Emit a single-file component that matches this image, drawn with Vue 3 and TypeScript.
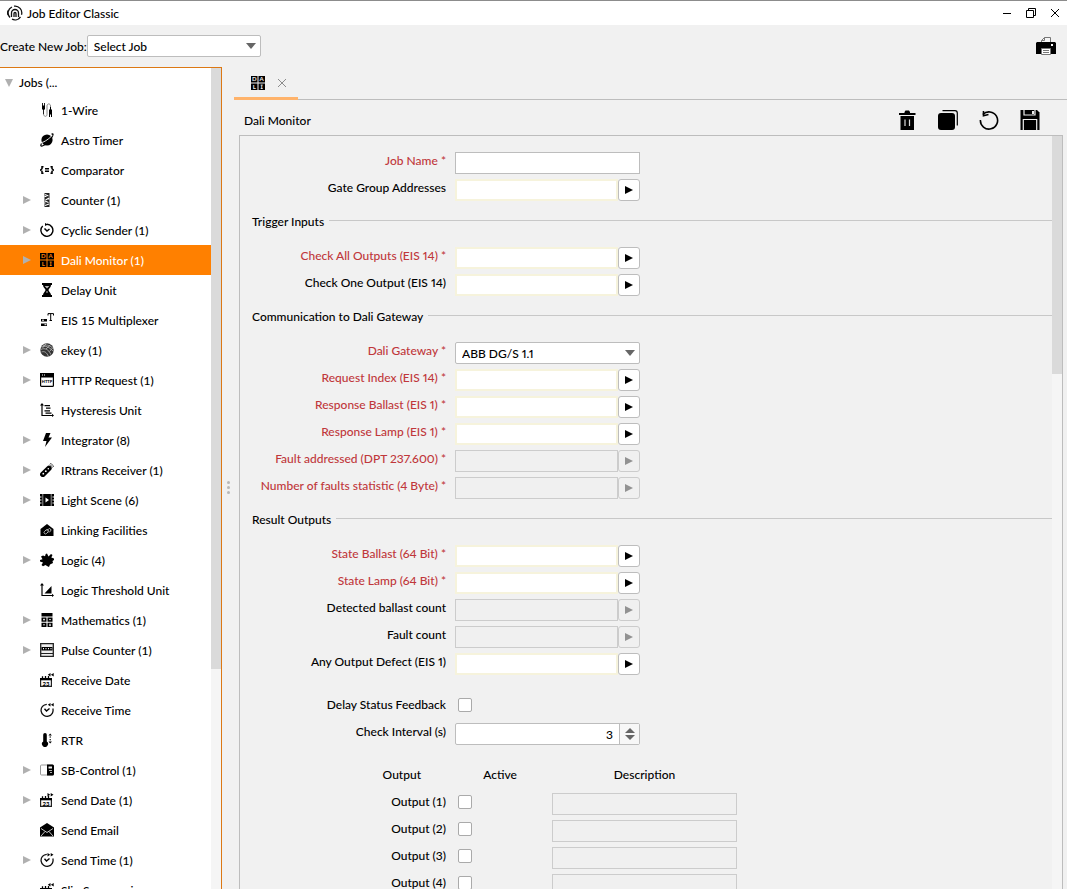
<script setup lang="ts">
import { ref } from 'vue'

interface Job { name: string; icon: string; group?: boolean }
interface Field { label: string; kind: 'text' | 'address' | 'select'; required?: boolean; disabled?: boolean }
interface Section { title: string; fields: Field[] }

const arrows = (right: boolean) => right
  ? '<path d="M7.500 0v3.600l2.700-1.800zM10.700 0v3.600l2.800-1.800z"/>'
  : '<path d="M10.500 0v3.600L7.800 1.800zM13.700 0v3.600L10.900 1.800z"/>'
const calendar =
  '<path d="M.6 6.400h10.800v7H.6z" fill="var(--cut)" stroke="#222" stroke-width="1.200"/><path d="M0 5h12v2.300H0z"/><path d="M2.500 3.200v3M5.500 3v3M8.500 3v3" stroke="#000" stroke-width="1.300"/><text x="6" y="12.500" font-size="6" font-weight="900" text-anchor="middle">23</text>'
const clock =
  '<path d="M6.800 1.300A6 6 0 1 0 12.800 5.500" fill="none" stroke="#111" stroke-width="1.300"/><path d="M4.500 5.800 6.500 8 9.500 5.500" fill="none" stroke="#000" stroke-width="1.400"/>'

const icons: Record<string, string> = {
  wire: '<path d="M2.500 0v3M4.500 0v3M3.500 6v5.500" stroke="#222" fill="none"/><path d="M2 2.500h3v3.500l-1 1H3l-1-1z"/><path d="M3.700 11.500c.3 2.500 3.300 2.500 3.300 0V3c0-2.800 3.500-2.800 3.500 0v3" fill="none" stroke="#888"/><path d="M9 6.500h3v5H9zM9 11.500h1V14H9zM11 11.500h1V14h-1z"/><path d="M10.500 4v3" stroke="#000"/>',
  planet: '<circle cx="7" cy="7" r="5.600"/><path d="M1.500 10.500C-1 15 4 13 8 9.200 12 5.500 15-1 11.500 1.300" fill="none" stroke="#000" stroke-width="1.200"/><path d="M1.500 9.500C4 9.500 10 5 12 2.500" fill="none" stroke="var(--cut)" stroke-width=".9"/>',
  comparator: '<path d="M3.500 3.700H2v2L.5 7 2 8.300v2h1.500M10.500 3.700H12v2L13.500 7 12 8.300v2h-1.500M5 5.700h4M5 8.300h4" fill="none" stroke="#000" stroke-width="1.500"/>',
  counter: '<path d="M4.500 0h5v14h-5z" fill="#222"/><path d="M5 1.500 8.500 3M9 5 5.500 7M5 8l3.500 1.500M5 12.500 9 11M4.500 3.500h2M7.500 6h2M4.500 10h1" stroke="#fff" stroke-width="1.100"/>',
  cyclic: '<path d="M7 1.300A6 6 0 1 1 2.700 3" fill="none" stroke="#000" stroke-width="1.400"/><path d="M5 0l3 1.500L5 3z"/><path d="M4.500 5.500 7 8l2.500-2" fill="none" stroke="#000" stroke-width="1.500"/>',
  dali: '<path d="M0 0h6.500v6.500H0zM7.500 0H14v6.500H7.500zM0 7.500h6.500V14H0zM7.500 7.500H14V14H7.500z"/><g fill="var(--cut)" font-size="6" font-weight="700" text-anchor="middle"><text x="3.300" y="5.400">D</text><text x="10.700" y="5.400">A</text><text x="3.300" y="12.900">L</text><text x="10.700" y="12.900">I</text></g><path d="M9.700 9h2M9.700 12.500h2" stroke="var(--cut)" stroke-width=".8"/>',
  hourglass: '<path d="M2 0h10v2H2zM2 12h10v2H2zM3 2h8c0 2.500-2.500 3.500-2.500 5s2.500 2.500 2.500 5H3c0-2.500 2.500-3.500 2.500-5S3 4.500 3 2z"/><path d="M4.700 3h4.600L7 5.500zM6.500 8h1v2h-1z" fill="#bbb"/>',
  mux: '<path d="M1 6h6v2.500H1zM1 10.500h6V13H1z"/><path d="M2 7.200h2M4.500 11.700h2" stroke="#fff"/><path d="M8 2.500V.6h5.500v1.900M10.700.6v7M9.500 7.500H12" fill="none" stroke="#000"/>',
  finger: '<circle cx="7" cy="7" r="6.700" fill="#333"/><path d="M1 4c4-2 8 0 12 4M.8 6.500c4-2 8 0 10 5M1.500 9c3-1 5 0 7 4.500M3 2.500C7 1 11 3 13 5.500M6 .8 2.500 5M10.500 1.800 6 6M13 4.500 9.500 8.500" fill="none" stroke="#ccc" stroke-width=".7"/>',
  http: '<rect x=".6" y=".6" width="12.800" height="12.800" rx="1" fill="#fff" stroke="#000" stroke-width="1.200"/><path d="M0 0h14v4.500H0z"/><path d="M2 2h1M4 2h1" stroke="#fff"/><text x="7" y="10" font-size="4" font-weight="900" text-anchor="middle">HTTP</text>',
  hysteresis: '<path d="M2 1v11.500h11" fill="none" stroke="#000" stroke-width="1.200"/><path d="M0 2.500 2 0l2 2.500zM12 10.800l2 1.700-2 1.500zM4.500 2H10v1.200H4.500zM6 4.600h4.500v1.200H6zM4.500 7.200H10v1.200H4.500zM5.500 9.600h6v1.200h-6z"/>',
  bolt: '<path d="M6 0h4.500L8.500 4.500H12L5 14l1.500-6H3z"/>',
  remote: '<path d="M.8 9.500 7 3.500a2.600 2.600 0 0 1 4 3.500L4.800 13.200A2.700 2.700 0 0 1 .8 9.500z"/><circle cx="3.300" cy="10.700" r=".9" fill="#fff"/><circle cx="5.800" cy="8.200" r=".9" fill="#fff"/><circle cx="8.300" cy="5.700" r=".8" fill="#fff"/><path d="M9.500 1.700a4 4 0 0 1 3 3M10 .2a5.500 5.500 0 0 1 3.800 3.800" fill="none" stroke="#444" stroke-width=".8"/>',
  film: '<path d="M0 1h14v12H0z"/><path d="M2.800 1v12M11.200 1v12" stroke="#fff" stroke-width=".6"/><path d="M0 4h1.500M0 7h1.500M0 10h1.500M12.500 4H14M12.500 7H14M12.500 10H14" stroke="#fff"/><path d="M5.500 4.500 9 7 5.500 9.500z" fill="#fff"/>',
  link: '<path d="M7 1l6.500 5v7H.5V6z"/><path d="M4.500 8.500l1.500-1.500a1.400 1.400 0 0 1 2 2l-1.500 1.500a1.400 1.400 0 0 1-2-2M7 7.500 8.500 6a1.400 1.400 0 0 1 2 2L9 9.500" fill="none" stroke="#ddd" stroke-width=".8"/>',
  puzzle: '<path d="M3 2.500 5 3.200 5.700 1 7 .5 8.500 3.500 11 1l1.500 1L11.300 4.500 14 5.500v1.500l-1.500 1L13 10l-3 1.500L9 14l-2-1-1.500-1L3 13.200 1.500 12 3 9.500 0 8.500 0 7l2.500-.7L1 3.500z"/>',
  threshold: '<path d="M2 1v11.500h11" fill="none" stroke="#000" stroke-width="1.200"/><path d="M0 2.500 2 0l2 2.500zM12 10.800l2 1.700-2 1.500zM4.500 10.500 11.500 3v7.500z"/>',
  calc: '<path d="M1.500 0h11v3.500h-11zM1.500 4.500h5v4.300h-5zM7.500 4.500h5v4.300h-5zM1.500 9.700h5V14h-5zM7.500 9.700h5V14h-5z"/><path d="M3 6.600h2M4 5.600v2M9 6.600h2M3 11.800h2M9 11.300h2M9 12.600h2" stroke="#fff" stroke-width=".8"/>',
  pulse: '<path d="M.7.7h12.600v12.600H.7z" fill="#eee" stroke="#222" stroke-width="1.300"/><path d="M1.500 4h11v3.500h-11z"/><path d="M3 5.700h1M5.500 5.700h1M8 5.700h1M10.500 5.700h1" stroke="#fff" stroke-width="1.200"/><path d="M1 10.500h12" stroke="#222"/>',
  rdate: calendar + arrows(false),
  rtime: clock + arrows(false),
  rtr: '<path d="M3.200 1.800a1.800 1.800 0 0 1 3.600 0V8.500a3 3 0 1 1-3.600 0z"/><path d="M8.500 2.500 10.200.5l1.700 2zM8.500 8.500l1.700 2 1.700-2zM9.500 3.500H11v1H9.500zM9.500 6.300H11v1H9.500z"/>',
  sb: '<rect x=".5" y="2" width="13" height="10" rx="1" fill="#fff" stroke="#999"/><path d="M7 1.500h5.500A1.500 1.500 0 0 1 14 3v8a1.500 1.500 0 0 1-1.500 1.500H7z"/><path d="M8.500 3.500H12v2H8.500z" fill="#eee"/><path d="M9 7.500h3M10 9.500h2" stroke="#ddd" stroke-width=".8"/>',
  sdate: calendar + arrows(true),
  mail: '<path d="M7 0l7 4.500V13.500H0V4.500z"/><path d="M1 5.500 7 9.500l6-4M1 13l4-4.500M13 13 9 8.500" fill="none" stroke="#eee" stroke-width=".8"/>',
  stime: clock + arrows(true),
}

const jobs: Job[] = [
  { name: '1-Wire', icon: 'wire' },
  { name: 'Astro Timer', icon: 'planet' },
  { name: 'Comparator', icon: 'comparator' },
  { name: 'Counter (1)', icon: 'counter', group: true },
  { name: 'Cyclic Sender (1)', icon: 'cyclic', group: true },
  { name: 'Dali Monitor (1)', icon: 'dali', group: true },
  { name: 'Delay Unit', icon: 'hourglass' },
  { name: 'EIS 15 Multiplexer', icon: 'mux' },
  { name: 'ekey (1)', icon: 'finger', group: true },
  { name: 'HTTP Request (1)', icon: 'http', group: true },
  { name: 'Hysteresis Unit', icon: 'hysteresis' },
  { name: 'Integrator (8)', icon: 'bolt', group: true },
  { name: 'IRtrans Receiver (1)', icon: 'remote', group: true },
  { name: 'Light Scene (6)', icon: 'film', group: true },
  { name: 'Linking Facilities', icon: 'link' },
  { name: 'Logic (4)', icon: 'puzzle', group: true },
  { name: 'Logic Threshold Unit', icon: 'threshold' },
  { name: 'Mathematics (1)', icon: 'calc', group: true },
  { name: 'Pulse Counter (1)', icon: 'pulse', group: true },
  { name: 'Receive Date', icon: 'rdate' },
  { name: 'Receive Time', icon: 'rtime' },
  { name: 'RTR', icon: 'rtr' },
  { name: 'SB-Control (1)', icon: 'sb', group: true },
  { name: 'Send Date (1)', icon: 'sdate', group: true },
  { name: 'Send Email', icon: 'mail' },
  { name: 'Send Time (1)', icon: 'stime', group: true },
  { name: 'Slip Suppression', icon: 'rdate' },
]
const selected = ref('Dali Monitor (1)')

const sections: Section[] = [
  { title: '', fields: [
    { label: 'Job Name', kind: 'text', required: true },
    { label: 'Gate Group Addresses', kind: 'address' },
  ] },
  { title: 'Trigger Inputs', fields: [
    { label: 'Check All Outputs (EIS 14)', kind: 'address', required: true },
    { label: 'Check One Output (EIS 14)', kind: 'address' },
  ] },
  { title: 'Communication to Dali Gateway', fields: [
    { label: 'Dali Gateway', kind: 'select', required: true },
    { label: 'Request Index (EIS 14)', kind: 'address', required: true },
    { label: 'Response Ballast (EIS 1)', kind: 'address', required: true },
    { label: 'Response Lamp (EIS 1)', kind: 'address', required: true },
    { label: 'Fault addressed (DPT 237.600)', kind: 'address', required: true, disabled: true },
    { label: 'Number of faults statistic (4 Byte)', kind: 'address', required: true, disabled: true },
  ] },
  { title: 'Result Outputs', fields: [
    { label: 'State Ballast (64 Bit)', kind: 'address', required: true },
    { label: 'State Lamp (64 Bit)', kind: 'address', required: true },
    { label: 'Detected ballast count', kind: 'address', disabled: true },
    { label: 'Fault count', kind: 'address', disabled: true },
    { label: 'Any Output Defect (EIS 1)', kind: 'address' },
  ] },
]
const interval = ref(3)
const outputs = [1, 2, 3, 4]
</script>

<template>
  <div class="window">
    <header class="titlebar">
      <svg class="logo" viewBox="0 0 16 16" fill="none" stroke="#111" stroke-width="1.300">
        <path d="M3 12.500A6.500 6.500 0 0 1 5 2M7 1.200a6.700 6.700 0 0 1 7.500 8.500M13.500 11.800A6.700 6.700 0 0 1 5 14.200M1 5.500a7 7 0 0 0 0 4.500" />
        <path d="M4.500 12V8a3.500 3.500 0 0 1 7 0v4M7 12V8.500a1 1 0 0 1 2 0V12" />
      </svg>
      <h1>Job Editor Classic</h1>
      <div class="controls">
        <button aria-label="Minimize"><svg viewBox="0 0 10 10"><path d="M1 5.500h8" /></svg></button>
        <button aria-label="Restore"><svg viewBox="0 0 10 10"><path d="M.5 2.500h7v7h-7zM2.500 2.500v-2h7v7h-2" /></svg></button>
        <button aria-label="Close"><svg viewBox="0 0 10 10"><path d="M1 1l8 8M9 1 1 9" /></svg></button>
      </div>
    </header>

    <div class="toolbar">
      <label for="new-job">Create New Job:</label>
      <span class="select new">
        <select id="new-job"><option>Select Job</option></select>
        <svg viewBox="0 0 10 6"><path d="M0 0h10L5 6z" /></svg>
      </span>
      <button class="print" aria-label="Print">
        <svg viewBox="0 0 20 18">
          <path d="M5.500 5V3.500L8.500.5h6V5" fill="#f4f4f4" stroke="#777" />
          <path d="M8.500.5v3h-3" fill="none" stroke="#777" />
          <path d="M1 5h18l1 1v11H0V6z" />
          <path d="M5.500 11.500h9v6h-9z" fill="#fff" stroke="#777" />
          <path d="M7 13.500h6M7 15.500h6" stroke="#777" />
          <path d="M15 7h2v2h-2z" fill="#fff" />
        </svg>
      </button>
    </div>

    <div class="body">
      <nav class="side">
        <ul class="tree">
          <li class="root"><svg class="caret" viewBox="0 0 8 8"><path d="M0 0h8L4 8z" /></svg>Jobs (...</li>
          <li v-for="j in jobs" :key="j.name">
            <button class="job" :class="{ on: j.name === selected }" @click="selected = j.name">
              <svg class="caret" viewBox="0 0 8 8"><path v-if="j.group" d="M0 0l8 4-8 4z" /></svg>
              <svg class="icon" viewBox="0 0 14 14" v-html="icons[j.icon]" />
              <span>{{ j.name }}</span>
            </button>
          </li>
        </ul>
        <div class="bar"><div class="thumb long" /></div>
      </nav>

      <div class="grip"><i /><i /><i /></div>

      <main class="editor">
        <div class="tabs">
          <div class="tab">
            <svg class="icon" viewBox="0 0 14 14" v-html="icons.dali" />
            <button aria-label="Close tab"><svg viewBox="0 0 10 10"><path d="M1 1l8 8M9 1 1 9" /></svg></button>
          </div>
        </div>

        <div class="head">
          <h2>Dali Monitor</h2>
          <div class="tools">
            <button aria-label="Delete">
              <svg viewBox="0 0 20 20"><path d="M7.500 2 8.500.5H12L13 2v1h5.500v2H2V3h5.500zM3.500 6H17v14H3.500z" /><path d="M8 9.500v6.500M12.500 9.500v6.500" stroke="#ddd" stroke-width="1.200" /></svg>
            </button>
            <button aria-label="Copy">
              <svg viewBox="0 0 20 20"><rect y="3" width="17" height="17" rx="3" /><path d="M4.500.7H17a2.300 2.300 0 0 1 2.300 2.300v12.500" fill="none" stroke="#000" stroke-width="1.200" /></svg>
            </button>
            <button aria-label="Reset">
              <svg viewBox="0 0 20 20"><path d="M3.800 4.500A8.600 8.600 0 1 1 1.400 10" fill="none" stroke="#000" stroke-width="1.600" /><path d="M4.500 1v4.800L9.500 4.500" fill="none" stroke="#000" stroke-width="1.600" /></svg>
            </button>
            <button aria-label="Save">
              <svg viewBox="0 0 20 20"><path d="M.5 0H17l2.500 2.500V20H.5z" /><path d="M3.300 20V9.500h13.400V20M4 0v5h11V0" fill="none" stroke="#eee" stroke-width="1.200" /><path d="M12 1h2v3h-2z" fill="#eee" /></svg>
            </button>
          </div>
        </div>

        <div class="panel">
          <form class="form" @submit.prevent>
            <template v-for="(s, si) in sections" :key="si">
              <h3 v-if="s.title"><span>{{ s.title }}</span></h3>
              <div class="rows">
                <div v-for="(f, fi) in s.fields" :key="f.label" class="row">
                  <label :for="`f${si}-${fi}`" :class="{ req: f.required }">{{ f.label }}<template v-if="f.required"> *</template></label>
                  <input v-if="f.kind === 'text'" :id="`f${si}-${fi}`" class="plain" type="text">
                  <span v-else-if="f.kind === 'select'" class="select">
                    <select :id="`f${si}-${fi}`"><option>ABB DG/S 1.1</option></select>
                    <svg viewBox="0 0 10 6"><path d="M0 0h10L5 6z" /></svg>
                  </span>
                  <span v-else class="address">
                    <input :id="`f${si}-${fi}`" type="text" :disabled="f.disabled">
                    <button type="button" :disabled="f.disabled" :aria-label="`Choose ${f.label}`"><svg viewBox="0 0 8 8"><path d="M0 0l8 4-8 4z" /></svg></button>
                  </span>
                </div>
              </div>
            </template>

            <div class="rows extra">
              <div class="row"><label for="delay">Delay Status Feedback</label><span><input id="delay" type="checkbox"></span></div>
              <div class="row">
                <label for="interval">Check Interval (s)</label>
                <span class="spin">
                  <input id="interval" v-model="interval" type="number">
                  <span class="steps">
                    <button type="button" aria-label="Increase" @click="interval++"><svg viewBox="0 0 10 5"><path d="M0 5h10L5 0z" /></svg></button>
                    <button type="button" aria-label="Decrease" @click="interval--"><svg viewBox="0 0 10 5"><path d="M0 0h10L5 5z" /></svg></button>
                  </span>
                </span>
              </div>
            </div>

            <table>
              <thead><tr><th class="c1">Output</th><th class="c2">Active</th><th class="c3">Description</th></tr></thead>
              <tbody>
                <tr v-for="n in outputs" :key="n">
                  <td class="c1"><label :for="`o${n}`">Output ({{ n }})</label></td>
                  <td class="c2"><input :id="`o${n}`" type="checkbox"></td>
                  <td class="c3"><input class="plain" type="text" disabled :aria-label="`Description ${n}`"></td>
                </tr>
              </tbody>
            </table>
          </form>
          <div class="bar"><div class="thumb" /></div>
        </div>
      </main>
    </div>
  </div>
</template>

<style>
html, body { margin: 0; height: 100%; overflow: hidden; }
</style>

<style scoped>
.window { height: 100vh; box-sizing: border-box; display: flex; flex-direction: column; background: #f1f1f1; border-top: 1px solid #8c8c8c; font: 500 12px/16px Lato, "Noto Sans", sans-serif; font-variant-numeric: proportional-nums; color: #000; --cut: #f1f1f1; }
.window * { box-sizing: border-box; }
button, input, select { font: inherit; font-variant-numeric: inherit; color: inherit; margin: 0; padding: 0; border: 0; background: none; border-radius: 0; }
svg { display: block; flex: none; }
h1, h2, h3 { font: inherit; margin: 0; }
button { display: flex; align-items: center; justify-content: center; }

.titlebar { flex: none; height: 24px; background: #fff; display: flex; align-items: center; gap: 4px; padding: 0 0 0 7px; }
.titlebar h1 { padding-top: 1px; }
.logo { width: 16px; height: 16px; }
.controls { display: flex; margin-left: auto; }
.controls button { width: 24px; height: 24px; }
.controls svg { width: 10px; height: 10px; fill: none; stroke: #000; }

.toolbar { flex: none; height: 42px; display: flex; align-items: center; padding-right: 11px; }
.toolbar label { flex: none; padding-top: 1px; white-space: nowrap; }
.select { position: relative; width: 185px; height: 22px; display: block; }
.select.new { width: 174px; }
.select select { width: 100%; height: 22px; padding: 1px 20px 0 6px; appearance: none; background: #fff; border: 1px solid #bdbdbd; border-radius: 2px; }
.select svg { position: absolute; right: 5px; top: 8px; width: 10px; height: 6px; fill: #666; pointer-events: none; }
.print { margin-left: auto; }
.print svg { width: 20px; height: 18px; }

.body { flex: 1; min-height: 0; display: flex; }
.side { flex: none; width: 222px; display: flex; background: #fff; border: solid #dc7814; border-width: 1px 1px 0 0; overflow: hidden; }
.tree { flex: 1; margin: 0; padding: 0; list-style: none; font-variant-numeric: normal; --cut: #fff; }
.root { display: flex; align-items: center; gap: 6px; height: 27px; padding: 3px 0 0 5px; }
.caret { width: 8px; height: 8px; fill: #b0b0b0; }
.icon { width: 14px; height: 14px; }
.job { width: 100%; height: 30px; padding-left: 23px; justify-content: flex-start; }
.job .icon { margin: 0 7px 0 9px; }
.job span { padding-top: 1px; white-space: nowrap; }
.job.on { background: #ff8000; color: #fff; --cut: #ff8000; }
.bar { flex: none; width: 10px; background: #f5f5f5; }
.thumb { height: 31.6%; background: #dadada; }
.thumb.long { height: 73.2%; }

.grip { flex: none; width: 12px; display: flex; flex-direction: column; align-items: center; justify-content: center; gap: 2px; padding-top: 18px; }
.grip i { width: 3px; height: 3px; border-radius: 50%; background: #b8b8b8; }

.editor { flex: 1; min-width: 0; display: flex; flex-direction: column; }
.tabs { flex: none; height: 33px; display: flex; border-bottom: 1px solid #bdbdbd; }
.tab { width: 64px; height: 33px; display: flex; align-items: center; gap: 12px; padding: 2px 0 0 17px; border-bottom: 3px solid #ffb36b; }
.tab button svg { width: 10px; height: 10px; fill: none; stroke: #8c8c8c; }
.head { flex: none; height: 35px; display: flex; align-items: center; justify-content: space-between; padding: 6px 27px 0 10px; }
.tools { display: flex; gap: 21px; margin-bottom: 2px; }
.tools svg { width: 20px; height: 20px; }

.panel { flex: 1; min-height: 0; display: flex; margin: 0 4px 0 5px; border: solid #bdbdbd; border-width: 1px 1px 0; overflow: hidden; }
.form { flex: 1; min-width: 0; padding: 16px 0 0 12px; }
.rows { display: flex; flex-direction: column; gap: 5px; }
.row { display: grid; grid-template-columns: 194px 1fr; column-gap: 9px; height: 22px; }
.row label { text-align: right; white-space: nowrap; line-height: 18px; }
.req { color: #c0373b; }
h3 { height: 46px; display: flex; gap: 5px; padding-top: 13px; }
h3::after { content: ""; flex: 1; height: 1px; margin-top: 6px; background: #c8c8c8; }
.plain { width: 185px; height: 22px; padding: 0 6px; background: #fff; border: 1px solid #bdbdbd; }
.plain:disabled { background: #f0f0f0; border-color: #ccc; }
.address { display: flex; width: 185px; height: 22px; }
.address input { flex: 1; min-width: 0; padding: 0 6px; background: #fff; border: 2px solid #f6f3dc; }
.address input:disabled { background: #f0f0f0; border: 1px solid #ccc; }
.address button { width: 22px; background: #fff; border: 1px solid #bdbdbd; border-radius: 3px; }
.address button svg { width: 8px; height: 8px; }
.address button:disabled { background: #f0f0f0; border-color: #ccc; }
.address button:disabled svg { fill: #929292; }
.extra { margin-top: 21px; }
input[type="checkbox"] { appearance: none; display: block; width: 14px; height: 14px; margin: 2px 0 0 3px; background: #fff; border: 1px solid #aaa; border-radius: 2px; }
input[type="checkbox"]:checked { background: #ff8000; }
.spin { display: flex; width: 185px; height: 22px; background: #fff; border: 1px solid #bdbdbd; border-radius: 2px; }
.spin input { flex: 1; min-width: 0; padding: 1px 6px 0 0; text-align: right; appearance: textfield; }
.spin input::-webkit-inner-spin-button { appearance: none; }
.steps { width: 20px; display: flex; flex-direction: column; justify-content: center; gap: 2px; border-left: 1px solid #bdbdbd; background: #f7f7f7; }
.steps svg { width: 10px; height: 5px; fill: #666; }

table { margin-top: 21px; border-collapse: collapse; table-layout: fixed; width: 485px; font-variant-numeric: normal; }
th, td { height: 27px; padding: 0; font-weight: 500; text-align: left; vertical-align: top; line-height: 18px; }
.c1 { width: 203px; text-align: right; padding-right: 9px; }
th.c1 { padding-right: 34px; }
.c2 { width: 97px; padding-right: 7px; }
th.c2, th.c3 { text-align: center; }
.c3 { width: 185px; }
.c3 input { display: block; }
</style>
